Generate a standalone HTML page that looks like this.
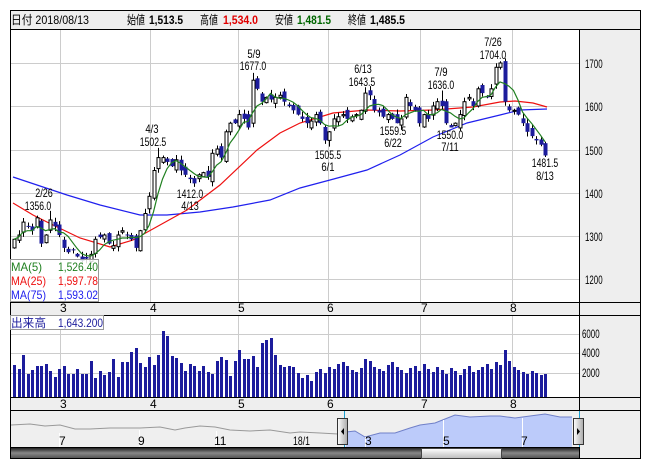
<!DOCTYPE html>
<html><head><meta charset="utf-8">
<style>
html,body{margin:0;padding:0;background:#fff;width:652px;height:469px;overflow:hidden}
svg{display:block}
text{font-family:"Liberation Sans","Noto Sans CJK JP",sans-serif;font-size:12px}
</style></head><body>
<svg id="s" width="652" height="469" xmlns="http://www.w3.org/2000/svg">
<rect x="10.5" y="10.5" width="630" height="448" fill="#fff" stroke="#000"/>
<rect x="11" y="11" width="629" height="18" fill="#eeeeee"/>
<line x1="10" y1="29.5" x2="641" y2="29.5" stroke="#000"/>
<text x="11" y="24" textLength="78" lengthAdjust="spacingAndGlyphs">日付 2018/08/13</text>
<text x="127" y="24" textLength="18" lengthAdjust="spacingAndGlyphs">始値</text><text x="149" y="24" font-weight="bold" textLength="34" lengthAdjust="spacingAndGlyphs">1,513.5</text>
<text x="200" y="24" textLength="18" lengthAdjust="spacingAndGlyphs">高値</text><text x="223" y="24" font-weight="bold" fill="#e00000" textLength="35" lengthAdjust="spacingAndGlyphs">1,534.0</text>
<text x="275" y="24" textLength="18" lengthAdjust="spacingAndGlyphs">安値</text><text x="297" y="24" font-weight="bold" fill="#006600" textLength="34" lengthAdjust="spacingAndGlyphs">1,481.5</text>
<text x="348" y="24" textLength="18" lengthAdjust="spacingAndGlyphs">終値</text><text x="370" y="24" font-weight="bold" textLength="35" lengthAdjust="spacingAndGlyphs">1,485.5</text>
<rect x="580" y="30" width="60" height="272" fill="#eeeeee"/>
<rect x="580" y="316" width="60" height="81" fill="#eeeeee"/>
<rect x="11" y="303" width="629" height="12" fill="#eeeeee"/>
<rect x="11" y="398" width="629" height="12" fill="#eeeeee"/>
<rect x="580" y="411" width="60" height="47" fill="#eeeeee"/>
<line x1="579.5" y1="29" x2="579.5" y2="459" stroke="#000"/>
<line x1="10" y1="302.5" x2="641" y2="302.5" stroke="#000"/>
<line x1="10" y1="315.5" x2="641" y2="315.5" stroke="#000"/>
<line x1="10" y1="397.5" x2="641" y2="397.5" stroke="#000"/>
<line x1="10" y1="410.5" x2="641" y2="410.5" stroke="#000"/>
<g id="grid" stroke="#cccccc" stroke-width="1"></g>
<g fill="#000" class="ax">
<text class="n" x="585" y="68">1700</text><text class="n" x="585" y="111">1600</text><text class="n" x="585" y="155">1500</text>
<text class="n" x="585" y="198">1400</text><text class="n" x="585" y="241">1300</text><text class="n" x="585" y="284">1200</text>
<text class="n" x="582" y="338">6000</text><text class="n" x="582" y="357">4000</text><text class="n" x="582" y="377">2000</text>
</g>
<g id="tl" font-size="11"></g>
<polyline fill="none" stroke="#2020ee" stroke-width="1.2" points="13,177 40,186 67,195 100,205 140,215 167,215 200,212 233,207 270,200 300,188 330,180 367,170 400,155 433,137 467,123 500,115 520,110 547,109"/>
<polyline fill="none" stroke="#ee1010" stroke-width="1.2" points="13,203 33,215 53,225 80,238 110,247 133,240 160,225 187,210 220,185 257,150 280,133 300,123 333,113 367,110 400,111 433,110 473,107 500,102 515,101 533,103 547,107"/>
<g id="candles"></g>
<polyline id="ma5" fill="none" stroke="#208020" stroke-width="1.2"/>
<g id="vol" fill="#1c1c9c"></g>
<g text-anchor="middle">
<text class="n" x="44" y="197">2/26</text><text class="n" x="38" y="210">1356.0</text>
<text class="n" x="152" y="133">4/3</text><text class="n" x="153" y="146">1502.5</text>
<text class="n" x="190" y="198">1412.0</text><text class="n" x="190" y="210">4/13</text>
<text class="n" x="254" y="58">5/9</text><text class="n" x="253" y="70">1677.0</text>
<text class="n" x="363" y="73">6/13</text><text class="n" x="362" y="86">1643.5</text>
<text class="n" x="328" y="159">1505.5</text><text class="n" x="328" y="171">6/1</text>
<text class="n" x="393" y="135">1559.5</text><text class="n" x="393" y="147">6/22</text>
<text class="n" x="441" y="76">7/9</text><text class="n" x="441" y="89">1636.0</text>
<text class="n" x="450" y="139">1550.0</text><text class="n" x="450" y="151">7/11</text>
<text class="n" x="493" y="46">7/26</text><text class="n" x="493" y="59">1704.0</text>
<text class="n" x="545" y="167">1481.5</text><text class="n" x="545" y="180">8/13</text>
</g>
<rect x="10.5" y="259.5" width="88" height="42" fill="#fff" fill-opacity="0.85" stroke="#999"/>
<text x="11" y="271" fill="#208020" textLength="31" lengthAdjust="spacingAndGlyphs">MA(5)</text><text x="58" y="271" fill="#208020" textLength="40" lengthAdjust="spacingAndGlyphs">1,526.40</text>
<text x="11" y="285" fill="#ee1010" textLength="35" lengthAdjust="spacingAndGlyphs">MA(25)</text><text x="58" y="285" fill="#ee1010" textLength="40" lengthAdjust="spacingAndGlyphs">1,597.78</text>
<text x="11" y="299" fill="#2020ee" textLength="35" lengthAdjust="spacingAndGlyphs">MA(75)</text><text x="58" y="299" fill="#2020ee" textLength="40" lengthAdjust="spacingAndGlyphs">1,593.02</text>
<rect x="10.5" y="315.5" width="93" height="14" fill="#fff" stroke="#999"/>
<text x="11" y="327" fill="#1c1c9c" textLength="35" lengthAdjust="spacingAndGlyphs">出来高</text><text x="58" y="327" fill="#1c1c9c" textLength="45" lengthAdjust="spacingAndGlyphs">1,643.200</text>
<rect x="11" y="411" width="568" height="36" fill="#efefef"/>
<path d="M346,447 L346,432 L355,431 L365,437 L380,433 L395,433 L410,428 L420,425 L435,423 L445,419 L455,415 L470,417 L490,416 L500,416 L515,418 L530,416 L545,414 L560,417 L572,417 L572,447 Z" fill="#bccbfa"/>
<polyline fill="none" stroke="#7080c8" stroke-width="1" points="346,432 355,431 365,437 380,433 395,433 410,428 420,425 435,423 445,419 455,415 470,417 490,416 500,416 515,418 530,416 545,414 560,417 572,417"/>
<polyline fill="none" stroke="#999" stroke-width="1" points="11,425 30,424 45,426 60,425 75,429 90,429 110,428 140,428 160,427 175,430 185,428 200,426 215,427 230,430 250,431 270,430 290,433 300,432 320,433 338,434"/>
<g stroke="#fff" stroke-width="1"><line x1="59.5" y1="433" x2="59.5" y2="447"/><line x1="139.5" y1="430" x2="139.5" y2="447"/><line x1="216.5" y1="431" x2="216.5" y2="447"/><line x1="365.5" y1="437" x2="365.5" y2="447"/><line x1="443.5" y1="420" x2="443.5" y2="447"/><line x1="522.5" y1="418" x2="522.5" y2="447"/></g>
<g font-size="11"><text x="59" y="445">7</text><text x="138" y="445">9</text><text x="214" y="445">11</text><text x="293" y="445" textLength="17" lengthAdjust="spacingAndGlyphs">18/1</text><text x="365" y="445">3</text><text x="443" y="445">5</text><text x="521" y="445">7</text></g>
<line x1="344.5" y1="411" x2="344.5" y2="458" stroke="#1aa0d0"/>
<line x1="579.5" y1="411" x2="579.5" y2="447" stroke="#1aa0d0"/>
<defs>
<linearGradient id="hg" x1="0" x2="1"><stop offset="0" stop-color="#fff"/><stop offset="1" stop-color="#aaa"/></linearGradient>
<linearGradient id="sb" x1="0" y1="0" x2="0" y2="1"><stop offset="0" stop-color="#222"/><stop offset="0.5" stop-color="#888"/><stop offset="1" stop-color="#555"/></linearGradient>
<linearGradient id="th" x1="0" y1="0" x2="0" y2="1"><stop offset="0" stop-color="#fff"/><stop offset="1" stop-color="#bbb"/></linearGradient>
</defs>
<rect x="337.5" y="418.5" width="10" height="26" fill="url(#hg)" stroke="#333"/>
<path d="M341,431.5 L344,428 L344,435 Z" fill="#000"/>
<rect x="573.5" y="418.5" width="10" height="26" fill="url(#hg)" stroke="#333"/>
<path d="M580,431.5 L577,428 L577,435 Z" fill="#000"/>
<rect x="11" y="448" width="568" height="10" fill="url(#sb)"/>
<line x1="10" y1="447.5" x2="580" y2="447.5" stroke="#000"/>
<rect x="421.5" y="448.5" width="80" height="10" fill="url(#th)" stroke="#444"/>
</svg>
<script>
(function(){
var NS="http://www.w3.org/2000/svg";
function el(p,t,a,txt){var e=document.createElementNS(NS,t);for(var k in a)e.setAttribute(k,a[k]);if(txt)e.textContent=txt;p.appendChild(e);return e;}
var g=document.getElementById('grid');
[63,106,150,193,236,279,334,353,373].forEach(function(y){el(g,'line',{x1:11,x2:579,y1:y+.5,y2:y+.5});});
[60,150,238,328,420,512].forEach(function(x){el(g,'line',{x1:x+.5,x2:x+.5,y1:30,y2:302});el(g,'line',{x1:x+.5,x2:x+.5,y1:316,y2:397});});
var tl=document.getElementById('tl');
[[63,'3'],[153,'4'],[241,'5'],[330,'6'],[424,'7'],[513,'8']].forEach(function(a){el(tl,'text',{x:a[0]-3,y:312},a[1]);el(tl,'text',{x:a[0]-3,y:408},a[1]);});
var ns=document.querySelectorAll('text.n');
for(var q=0;q<ns.length;q++){var t=ns[q];t.setAttribute('textLength',(t.textContent.length*4.4).toFixed(1));t.setAttribute('lengthAdjust','spacingAndGlyphs');}
var C=[1290,1300,1330,1320,1310,1340,1280,1300,1335,1320,
1300,1270,1260,1265,1250,1240,1245,1255,1290,1295,
1300,1280,1275,1300,1310,1300,1290,1270,1310,1350,
1390,1450,1480,1480,1470,1460,1475,1450,1440,1430,
1420,1440,1445,1435,1490,1500,1480,1540,1560,1560,
1580,1570,1550,1660,1640,1610,1620,1615,1620,1625,
1610,1600,1590,1580,1570,1560,1565,1580,1560,1520,
1540,1570,1575,1580,1570,1575,1580,1590,1630,1625,
1590,1585,1575,1580,1570,1560,1570,1620,1600,1590,
1560,1580,1570,1600,1610,1600,1560,1550,1560,1580,
1610,1620,1600,1640,1630,1620,1640,1690,1700,1610,
1590,1590,1580,1560,1540,1530,1520,1510,1485];
var V=[32,28,42,23,27,31,31,33,26,20,28,31,23,23,28,23,23,36,19,26,22,25,38,20,35,35,45,49,34,30,40,32,42,66,61,41,39,34,26,33,31,26,31,25,23,36,40,37,21,36,47,38,38,41,30,54,57,59,42,32,30,31,30,24,19,22,16,25,28,24,
30,28,33,35,31,27,25,29,38,36,30,28,26,32,35,30,27,24,29,31,26,33,28,25,30,27,23,29,26,22,28,31,25,27,30,33,28,35,32,47,36,30,27,25,23,26,24,22,23];
function Y(p){return 106-(p-1600)*0.43;}
var cg=document.getElementById('candles'),vg=document.getElementById('vol');
var ext={8:[1356,null],32:[1502.5,null],40:[null,1412],53:[1677,null],70:[null,1505.5],78:[1643.5,null],85:[null,1559.5],95:[1636,null],97:[null,1550],108:[1704,null],118:[null,1481.5]};
var pts=[];
for(var i=0;i<C.length;i++){
 var x=14+i*4.5,c=C[i];
 var o=i?C[i-1]+(((i*37)%11)-5)*2.2:1270;
 if(i==53)o=1560; if(i==118)o=1513.5; if(i==108)o=1690;
 var hi=Math.max(o,c)+((i*13)%7)*1.5+2,lo=Math.min(o,c)-((i*17)%7)*1.5-2;
 if(ext[i]){if(ext[i][0])hi=ext[i][0];if(ext[i][1])lo=ext[i][1];}
 var xc=Math.round(x)+.5;
 el(cg,'line',{x1:xc,x2:xc,y1:Y(hi),y2:Y(lo),stroke:'#000','stroke-width':1});
 var bt=Y(Math.max(o,c)),bh=Math.max(1,Y(Math.min(o,c))-bt);
 if(c>=o) el(cg,'rect',{x:xc-1.5,y:bt,width:3,height:bh,fill:'#fff',stroke:'#000','stroke-width':1});
 else el(cg,'rect',{x:xc-2,y:bt,width:4,height:bh,fill:'#1c1c9c'});
 var s=0,n=0;for(var j=Math.max(0,i-4);j<=i;j++){s+=C[j];n++;}
 pts.push(x.toFixed(1)+','+Y(s/n).toFixed(1));
 el(vg,'rect',{x:Math.round(x)-1,y:397-V[i],width:3,height:V[i]});
}
document.getElementById('ma5').setAttribute('points',pts.join(' '));
})();
</script>
</body></html>
